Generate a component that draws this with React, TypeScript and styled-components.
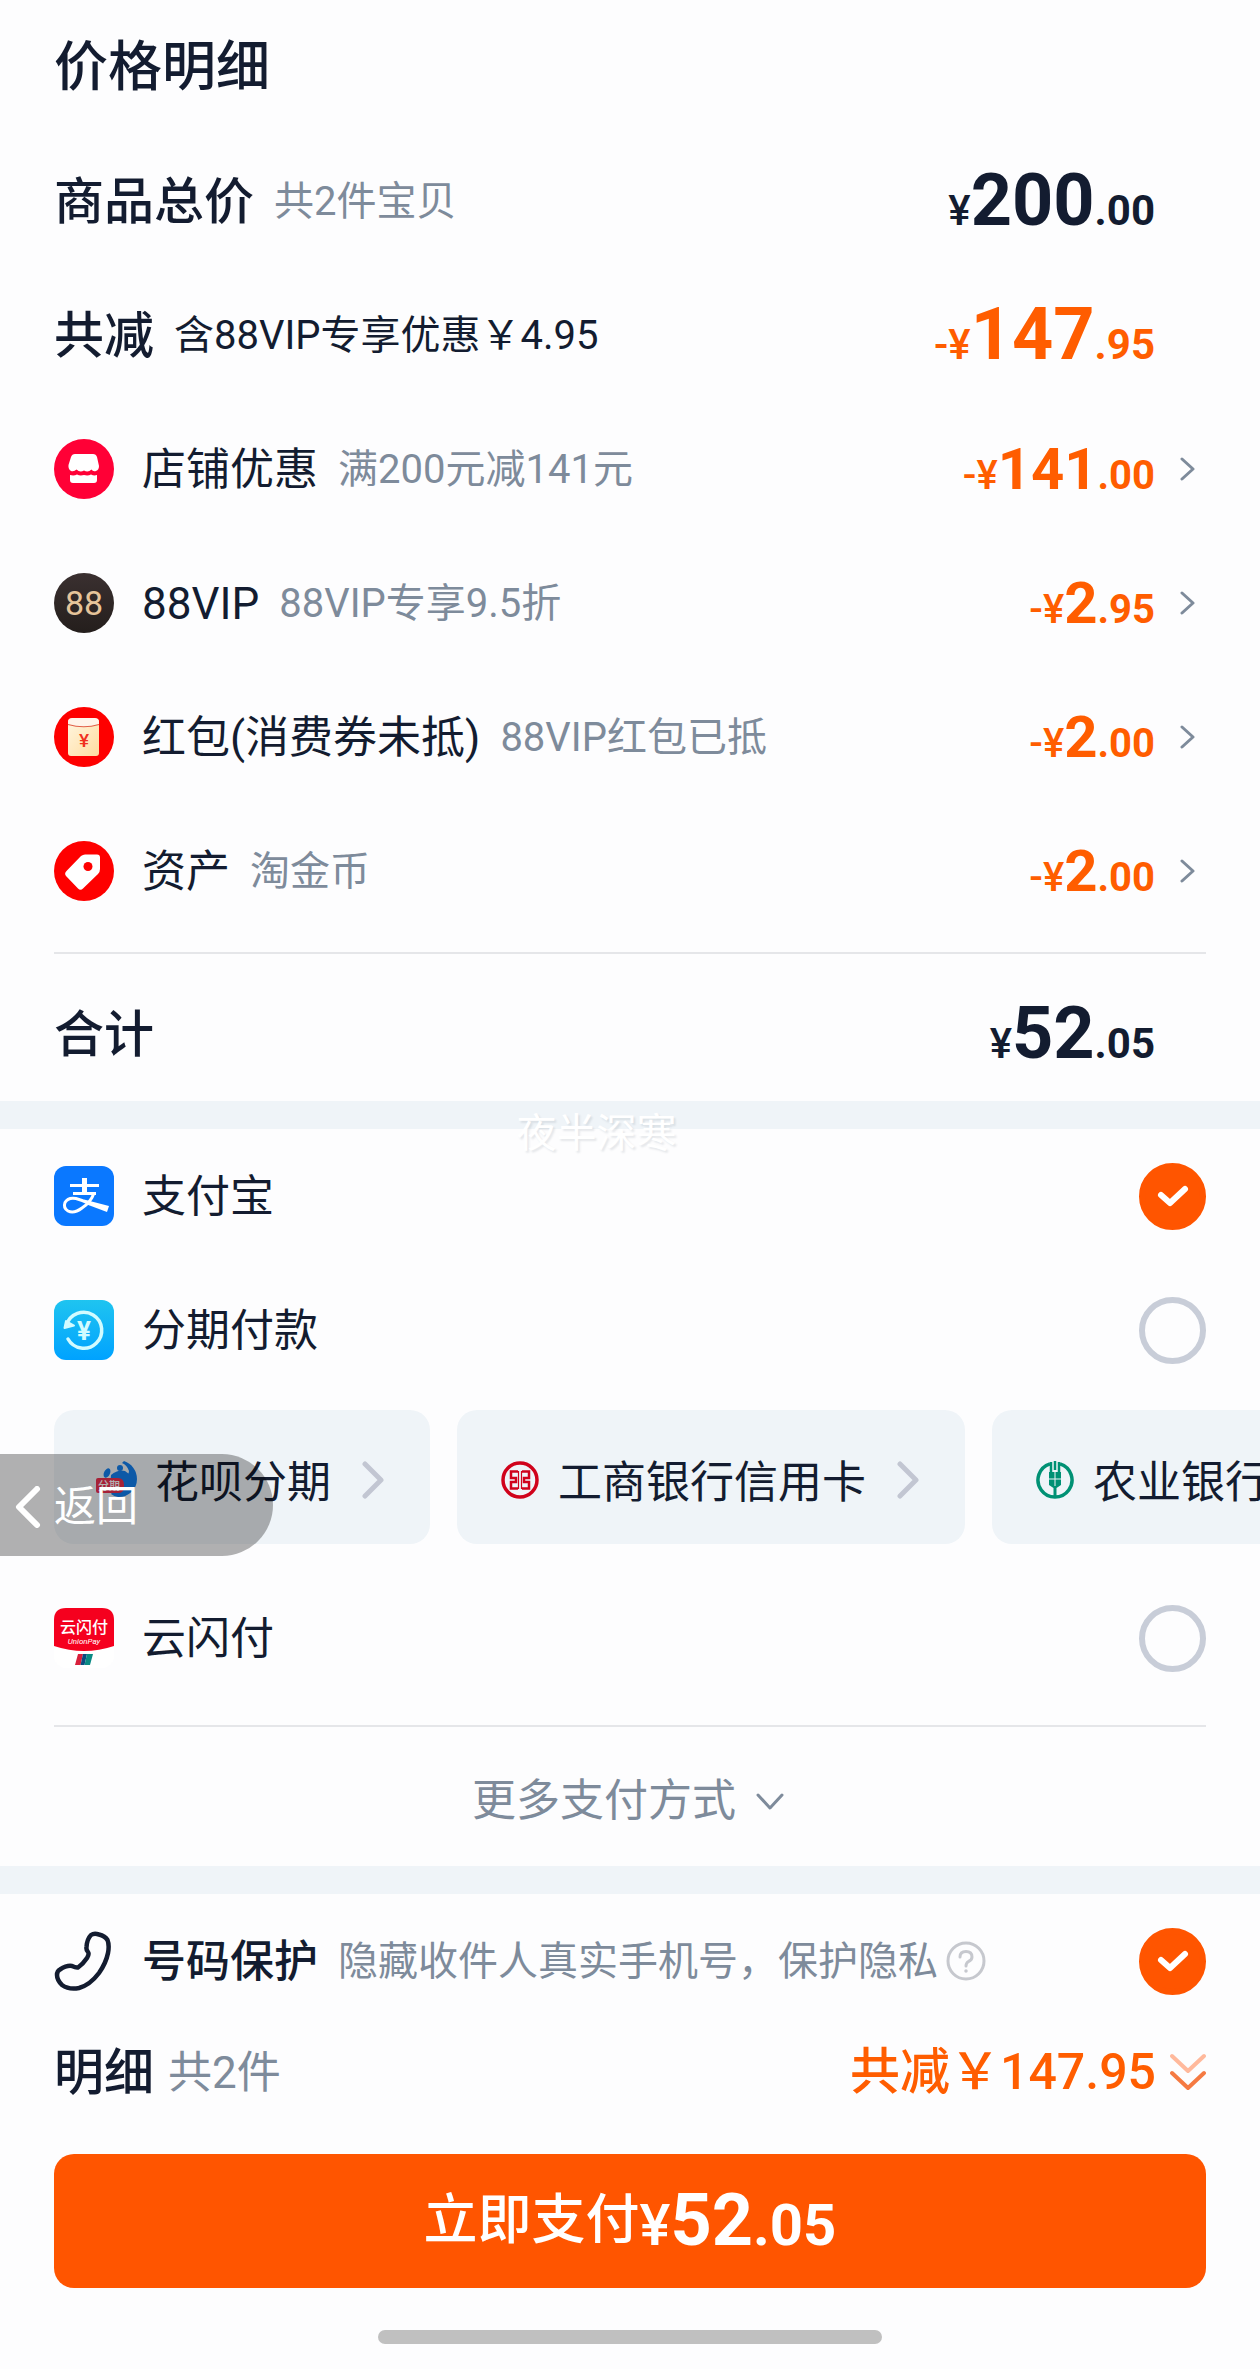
import React, { useState } from "react";
import styled, { createGlobalStyle } from "styled-components";

const INK = "#131c30";
const MUTED = "#7e8b9b";
const ORANGE = "#ff5500";
const PRICE_ORANGE = "#ff5d00";
const PANEL = "#eff4f8";
const FONT = 'Roboto, "Noto Sans CJK SC", sans-serif';

const GlobalStyle = createGlobalStyle`
  *, *::before, *::after { box-sizing: border-box; }
  body {
    margin: 0;
    background: #fdfdfe;
    color: ${INK};
    font-family: ${FONT};
    overflow-x: hidden;
  }
  button {
    margin: 0;
    padding: 0;
    border: 0;
    background: none;
    color: inherit;
    font: inherit;
    text-align: left;
    cursor: pointer;
  }
  svg { display: block; flex: none; }
`;

const Page = styled.main`
  display: flex;
  flex-direction: column;
  width: 100%;
  line-height: 1.2;
`;

const Section = styled.section`
  display: flex;
  flex-direction: column;
  padding: 0 54px;
`;

const Title = styled.h1`
  display: flex;
  align-items: center;
  height: 134px;
  margin: 0;
  padding-top: 2px;
  font-size: 54px;
  font-weight: 500;
`;

const List = styled.ul`
  margin: 0;
  padding: 0;
  list-style: none;
`;

const Row = styled.div`
  display: flex;
  align-items: center;
  justify-content: space-between;
  width: 100%;
  height: 134px;
`;

const SummaryRow = styled(Row)`
  padding-right: 51px;
`;

const RowButton = styled(Row).attrs({ as: "button", type: "button" })`
  padding-right: 11px;
`;

const Lead = styled.span`
  display: flex;
  align-items: center;
  gap: 20px;
  white-space: nowrap;
`;

const IconSlot = styled.span`
  width: 60px;
  margin-right: 8px;
`;

const Label = styled.span<{ $size?: number; $weight?: number; $muted?: boolean }>`
  padding-top: 2px;
  font-size: ${(p) => p.$size ?? 44}px;
  font-weight: ${(p) => p.$weight ?? 400};
  color: ${(p) => (p.$muted ? MUTED : INK)};
`;

const Note = styled.span<{ $dark?: boolean }>`
  padding-top: 2px;
  font-size: 40px;
  color: ${(p) => (p.$dark ? INK : MUTED)};
`;

const Trail = styled.span`
  display: flex;
  align-items: center;
  gap: 25px;
`;

const PriceText = styled.span<{ $size: number; $color: string }>`
  font-size: ${(p) => p.$size}px;
  font-weight: 700;
  line-height: 1;
  color: ${(p) => p.$color};
  white-space: nowrap;
`;

const PriceSmall = styled.span<{ $size: number; $weight?: number }>`
  font-size: ${(p) => p.$size}px;
  font-weight: ${(p) => p.$weight ?? 700};
`;

const Rule = styled.hr<{ $top: number; $bottom: number }>`
  width: 100%;
  height: 2px;
  margin: ${(p) => p.$top}px 0 ${(p) => p.$bottom}px;
  border: 0;
  background: #e5e6e9;
`;

const Band = styled.div`
  position: relative;
  height: 28px;
  background: ${PANEL};
`;

const Watermark = styled.span`
  position: absolute;
  left: 41%;
  top: 9px;
  font-size: 40px;
  color: #ffffff;
  text-shadow: 2px 2px 2px rgba(60, 70, 90, 0.12);
  pointer-events: none;
`;

const PayLabel = styled.label`
  display: flex;
  align-items: center;
  justify-content: space-between;
  height: 134px;
  cursor: pointer;
`;

const CheckBox = styled.span`
  display: grid;
  width: 67px;
  height: 67px;
  & > * { grid-area: 1 / 1; }
  & > svg { pointer-events: none; }
`;

const Toggle = styled.input`
  appearance: none;
  width: 67px;
  height: 67px;
  margin: 0;
  border: 6px solid #c8cdd8;
  border-radius: 50%;
  cursor: pointer;
  &:checked {
    border-color: ${ORANGE};
    background: ${ORANGE};
  }
  &:not(:checked) + svg { visibility: hidden; }
`;

const CardArea = styled.div`
  position: relative;
  margin: 13px -54px 27px;
`;

const Cards = styled.div`
  display: flex;
  gap: 27px;
  padding-left: 54px;
  overflow: hidden;
`;

const Card = styled.button`
  display: flex;
  flex: none;
  align-items: center;
  height: 134px;
  padding: 6px 46px 0 44px;
  border-radius: 20px;
  background: ${PANEL};
  font-size: 44px;
  white-space: nowrap;
`;

const CardName = styled.span`
  margin: 0 31px 0 19px;
  padding-top: 6px;
`;

const BackPill = styled.button`
  position: absolute;
  left: 0;
  top: 44px;
  display: flex;
  align-items: center;
  gap: 13px;
  width: 273px;
  height: 102px;
  padding: 4px 0 0 15px;
  border-radius: 0 51px 51px 0;
  background: rgba(0, 0, 0, 0.3);
  color: #ffffff;
  font-size: 42px;
`;

const MoreButton = styled.button`
  display: flex;
  align-items: center;
  justify-content: center;
  gap: 20px;
  height: 139px;
  padding-top: 10px;
  color: ${MUTED};
  font-size: 44px;
`;

const HelpButton = styled.button`
  margin-left: -12px;
`;

const DetailRow = styled(Row)`
  height: 88px;
`;

const DetailLead = styled(Lead)`
  gap: 14px;
`;

const SavedButton = styled.button`
  display: flex;
  align-items: center;
  gap: 14px;
  color: ${PRICE_ORANGE};
  font-size: 50px;
  font-weight: 500;
  white-space: nowrap;
`;

const PayButton = styled.button`
  display: flex;
  align-items: center;
  justify-content: center;
  height: 134px;
  margin-top: 38px;
  border-radius: 20px;
  background: ${ORANGE};
  color: #ffffff;
  font-size: 54px;
  font-weight: 500;
`;

const HomeBar = styled.div`
  align-self: center;
  width: 40%;
  height: 14px;
  margin: 42px 0 24px;
  border-radius: 7px;
  background: #c0c0c0;
`;

function ChevronRight({ large, color = MUTED }: { large?: boolean; color?: string }) {
  return large ? (
    <svg width="22" height="38" viewBox="0 0 22 38" fill="none" stroke={color} strokeWidth="5" strokeLinecap="round" strokeLinejoin="round">
      <path d="M3 3 19 19 3 35" />
    </svg>
  ) : (
    <svg width="15" height="24" viewBox="0 0 15 24" fill="none" stroke={color} strokeWidth="3" strokeLinecap="round" strokeLinejoin="round">
      <path d="M2 2 13 12 2 22" />
    </svg>
  );
}

function ShopIcon() {
  return (
    <svg width="60" height="60" viewBox="0 0 60 60">
      <circle cx="30" cy="30" r="30" fill="#ff0036" />
      <path d="M21 15H39Q42 15 43 18L45 27Q45 31 42 32Q39 33 37.500 30.500Q34 34 30 31.500Q26 34 22.500 30.500Q20 33 17 32Q14 30 14.500 26L17 18Q18 15 21 15Z" fill="#fff" />
      <path d="M16 36Q20 37 23 35.500Q26 37 30 36Q34 37 37 35.500Q40 37 43 36V41Q43 44 40 44H19Q16 44 16 41Z" fill="#fff" />
    </svg>
  );
}

function VipIcon() {
  return (
    <svg width="60" height="60" viewBox="0 0 60 60">
      <defs>
        <linearGradient id="vip" x1="0" y1="0" x2="0" y2="1">
          <stop offset="0" stopColor="#3a3030" />
          <stop offset="1" stopColor="#241e1c" />
        </linearGradient>
      </defs>
      <circle cx="30" cy="30" r="30" fill="url(#vip)" />
      <text x="30" y="42" textAnchor="middle" fontFamily="Roboto, sans-serif" fontSize="34" fontWeight="400" fill="#e6c49a">88</text>
    </svg>
  );
}

function PacketIcon() {
  return (
    <svg width="60" height="60" viewBox="0 0 60 60">
      <defs>
        <linearGradient id="packet" x1="0" y1="0" x2="1" y2="1">
          <stop offset="0" stopColor="#fff6e0" />
          <stop offset="1" stopColor="#ffdca0" />
        </linearGradient>
      </defs>
      <circle cx="30" cy="30" r="30" fill="#fe0000" />
      <rect x="14" y="12" width="31" height="37" rx="3" fill="url(#packet)" />
      <path d="M14 15Q14 11 18 11H41Q45 11 45 15V17Q30 22 14 17Z" fill="#fff4ea" />
      <path d="M14 17.500Q30 22 45 17.500" fill="none" stroke="#e0604a" strokeWidth="1.200" />
      <text x="30" y="40" textAnchor="middle" fontFamily="Roboto, sans-serif" fontSize="19" fontWeight="500" fill="#f03020">¥</text>
    </svg>
  );
}

function TagIcon() {
  return (
    <svg width="60" height="60" viewBox="0 0 60 60">
      <circle cx="30" cy="30" r="30" fill="#fe0000" />
      <path d="M27 15Q29 13.500 31 13.500L43 13.500Q46 13.500 46 16.500V28Q46 31 44 33L29 47.500Q26.500 50 24 47.500L12 35Q10 32.500 12.500 30Z" fill="#fff" />
      <circle cx="34" cy="25.500" r="4.500" fill="#fe0000" />
    </svg>
  );
}

function AlipayIcon() {
  return (
    <svg width="60" height="60" viewBox="0 0 60 60" fill="none" stroke="#fff">
      <rect width="60" height="60" rx="12" fill="#0a78ff" stroke="none" />
      <path d="M30.500 12V27" strokeWidth="5" />
      <path d="M16 19.500H45" strokeWidth="3" />
      <path d="M19 27.500H42" strokeWidth="3" />
      <path d="M40 27Q37 36 28 42Q20 48 14 45Q9 42 11 36.500Q14 31 22 32.500Q28 34 36 38" strokeWidth="3" />
      <path d="M30 33.500 55 40 53 46 33 38.500Z" fill="#fff" stroke="none" />
    </svg>
  );
}

function InstallmentIcon() {
  return (
    <svg width="60" height="60" viewBox="0 0 60 60">
      <defs>
        <linearGradient id="inst" x1="0" y1="0" x2="0" y2="1">
          <stop offset="0" stopColor="#1fc4f0" />
          <stop offset="1" stopColor="#00a2ff" />
        </linearGradient>
      </defs>
      <rect width="60" height="60" rx="12" fill="url(#inst)" />
      <path d="M12.500 25A18 18 0 1 1 14 39" fill="none" stroke="#d2fbff" strokeWidth="3.500" strokeLinecap="round" />
      <path d="M10.500 28 20 25.500 12 21Z" fill="#d2fbff" stroke="#d2fbff" strokeWidth="2" strokeLinejoin="round" />
      <text x="30" y="39.500" textAnchor="middle" fontFamily="Roboto, sans-serif" fontSize="26" fontWeight="700" fill="#d2fbff">¥</text>
    </svg>
  );
}

function UnionPayIcon() {
  return (
    <svg width="60" height="60" viewBox="0 0 60 60">
      <rect width="60" height="60" rx="12" fill="#fff" />
      <path d="M12 0H48Q60 0 60 12V38Q30 48 0 38V12Q0 0 12 0Z" fill="#f5001e" />
      <text x="30" y="25" textAnchor="middle" fontFamily="'Noto Sans CJK SC', sans-serif" fontSize="16" fontWeight="500" fill="#fff">云闪付</text>
      <text x="30" y="36" textAnchor="middle" fontFamily="Roboto, sans-serif" fontSize="8" fontStyle="italic" fill="#fff">UnionPay</text>
      <path d="M24 46H29L26.500 57H21Z" fill="#d8203c" />
      <path d="M29 46H33L30.500 57H26.500Z" fill="#0c4a80" />
      <path d="M33 46H39L36 57H30.500Z" fill="#0a8a84" />
    </svg>
  );
}

function HuabeiIcon() {
  return (
    <svg width="38" height="38" viewBox="0 0 38 38" overflow="visible">
      <path d="M26 0A19 19 0 0 1 39 18A18 18 0 0 1 20 36A15 15 0 0 1 13 33L24 18Q31 15 31 10Q29 4 24 2Z" fill="#1480f0" />
      <path d="M13 14Q20 8 27 10L31 13 28 24 12 26Z" fill="#1480f0" />
      <ellipse cx="9" cy="12" rx="3" ry="5" transform="rotate(25 9 12)" fill="#1480f0" />
      <circle cx="22" cy="7" r="3" fill="#1480f0" />
      <path d="M0 17H20Q26 17 26 24V26Q26 32 20 32H0Q-2 32 -2 30V19Q-2 17 0 17Z" fill="#ee3050" />
      <text x="11" y="29" textAnchor="middle" fontFamily="'Noto Sans CJK SC', sans-serif" fontSize="11" fontWeight="500" fill="#fff">分期</text>
    </svg>
  );
}

function IcbcIcon() {
  return (
    <svg width="38" height="38" viewBox="0 0 38 38" fill="none" stroke="#d0021b">
      <circle cx="19" cy="19" r="17" strokeWidth="3.500" />
      <path d="M17 10.500H10V17H15V21H10V27.500H17M21 10.500H28V17H23V21H28V27.500H21" strokeWidth="2.500" />
      <path d="M17.500 10V28M20.500 10V28" strokeWidth="1.200" />
    </svg>
  );
}

function AbcIcon() {
  return (
    <svg width="38" height="38" viewBox="0 0 38 38" fill="none" stroke="#009174">
      <path d="M14 2.800A17 17 0 1 0 24 2.800" strokeWidth="3.500" />
      <path d="M19 0V9M15 1V12M23 1V12" strokeWidth="2.500" />
      <path d="M13 11H25V24L20.500 27V36H17.500V27L13 24Z" fill="#009174" stroke="none" />
      <path d="M19 10V25M13 18H25" stroke="#eff4f8" strokeWidth="1" />
    </svg>
  );
}

function PhoneIcon() {
  return (
    <svg width="60" height="60" viewBox="0 0 60 60" fill="none" stroke={INK} strokeWidth="4.500" strokeLinejoin="round">
      <path d="M37 4Q40 2 45 3.500Q51 5 53.500 9Q55.500 14 54 22Q52 32 45 42Q36 54 25 57Q15 59 8 54Q3 49 3 44Q3 40 6 38.500Q13 34 18 35Q22 37 24 36.500Q29 33 33 27Q35.500 23 34 21Q32 19 32.500 16Q33 8 37 4Z" />
    </svg>
  );
}

function HelpIcon() {
  return (
    <svg width="40" height="40" viewBox="0 0 40 40" fill="none" stroke="#c6c8ce" strokeWidth="3" strokeLinecap="round">
      <circle cx="20" cy="20" r="18" />
      <path d="M14 16Q14 10.500 20 10.500T26 16Q26 19 22.500 20.500Q20 22 20 25" />
      <circle cx="20" cy="30" r="1" fill="#c6c8ce" strokeWidth="1.500" />
    </svg>
  );
}

function Tick() {
  return (
    <svg width="67" height="67" viewBox="0 0 67 67" fill="none" stroke="#fff" strokeWidth="6" strokeLinecap="round" strokeLinejoin="round">
      <path d="M22 32 31 40 46 26" />
    </svg>
  );
}

type PriceProps = { whole: string; cents: string; minus?: boolean; size?: number; small?: number; color?: string };

function Price({ whole, cents, minus, size = 72, small = 42, color = INK }: PriceProps) {
  return (
    <PriceText $size={size} $color={color}>
      <PriceSmall $size={small} $weight={500}>{minus ? "-¥" : "¥"}</PriceSmall>
      {whole}
      <PriceSmall $size={small}>.{cents}</PriceSmall>
    </PriceText>
  );
}

const discounts = [
  { icon: <ShopIcon />, name: "店铺优惠", note: "满200元减141元", whole: "141", cents: "00" },
  { icon: <VipIcon />, name: "88VIP", note: "88VIP专享9.5折", whole: "2", cents: "95" },
  { icon: <PacketIcon />, name: "红包(消费券未抵)", note: "88VIP红包已抵", whole: "2", cents: "00" },
  { icon: <TagIcon />, name: "资产", note: "淘金币", whole: "2", cents: "00" },
];

const cards = [
  { icon: <HuabeiIcon />, name: "花呗分期" },
  { icon: <IcbcIcon />, name: "工商银行信用卡" },
  { icon: <AbcIcon />, name: "农业银行信用卡" },
];

type OptionProps = { icon: React.ReactNode; name: string; value: string; current: string; onPick: (v: string) => void };

function PayOption({ icon, name, value, current, onPick }: OptionProps) {
  return (
    <PayLabel>
      <Lead>
        <IconSlot>{icon}</IconSlot>
        <Label>{name}</Label>
      </Lead>
      <CheckBox>
        <Toggle type="radio" name="pay" value={value} checked={current === value} onChange={() => onPick(value)} />
        <Tick />
      </CheckBox>
    </PayLabel>
  );
}

export default function App() {
  const [method, setMethod] = useState("alipay");
  const [guard, setGuard] = useState(true);

  return (
    <Page>
      <GlobalStyle />
      <Section>
        <Title>价格明细</Title>
        <SummaryRow>
          <Lead>
            <Label $size={50} $weight={500}>商品总价</Label>
            <Note>共2件宝贝</Note>
          </Lead>
          <Price whole="200" cents="00" />
        </SummaryRow>
        <SummaryRow>
          <Lead>
            <Label $size={50} $weight={500}>共减</Label>
            <Note $dark>含88VIP专享优惠￥4.95</Note>
          </Lead>
          <Price minus whole="147" cents="95" color={PRICE_ORANGE} />
        </SummaryRow>
        <List>
          {discounts.map((d) => (
            <li key={d.name}>
              <RowButton>
                <Lead>
                  <IconSlot>{d.icon}</IconSlot>
                  <Label>{d.name}</Label>
                  <Note>{d.note}</Note>
                </Lead>
                <Trail>
                  <Price minus whole={d.whole} cents={d.cents} size={58} small={40} color={PRICE_ORANGE} />
                  <ChevronRight />
                </Trail>
              </RowButton>
            </li>
          ))}
        </List>
        <Rule $top={14} $bottom={13} />
        <SummaryRow>
          <Label $size={50} $weight={500}>合计</Label>
          <Price whole="52" cents="05" />
        </SummaryRow>
      </Section>

      <Band>
        <Watermark>夜半深寒</Watermark>
      </Band>

      <Section>
        <PayOption icon={<AlipayIcon />} name="支付宝" value="alipay" current={method} onPick={setMethod} />
        <PayOption icon={<InstallmentIcon />} name="分期付款" value="installment" current={method} onPick={setMethod} />
        <CardArea>
          <Cards>
            {cards.map((c) => (
              <Card key={c.name} type="button">
                {c.icon}
                <CardName>{c.name}</CardName>
                <ChevronRight large color="#c2c6d2" />
              </Card>
            ))}
          </Cards>
          <BackPill type="button">
            <svg width="26" height="42" viewBox="0 0 26 42" fill="none" stroke="#fff" strokeWidth="6" strokeLinecap="round" strokeLinejoin="round">
              <path d="M22 3 4 21 22 39" />
            </svg>
            返回
          </BackPill>
        </CardArea>
        <PayOption icon={<UnionPayIcon />} name="云闪付" value="unionpay" current={method} onPick={setMethod} />
        <Rule $top={20} $bottom={0} />
        <MoreButton type="button">
          更多支付方式
          <svg width="32" height="18" viewBox="0 0 32 18" fill="none" stroke={MUTED} strokeWidth="3" strokeLinecap="round" strokeLinejoin="round">
            <path d="M2 2 14 15 26 2" />
          </svg>
        </MoreButton>
      </Section>

      <Band />

      <Section>
        <Row>
          <Lead>
            <IconSlot><PhoneIcon /></IconSlot>
            <Label as="label" htmlFor="guard" $weight={500}>号码保护</Label>
            <Note>隐藏收件人真实手机号，保护隐私</Note>
            <HelpButton type="button" aria-label="号码保护说明"><HelpIcon /></HelpButton>
          </Lead>
          <CheckBox>
            <Toggle id="guard" type="checkbox" checked={guard} onChange={() => setGuard(!guard)} />
            <Tick />
          </CheckBox>
        </Row>
        <DetailRow>
          <DetailLead>
            <Label $size={50} $weight={500}>明细</Label>
            <Label $muted>共2件</Label>
          </DetailLead>
          <SavedButton type="button">
            共减￥147.95
            <svg width="36" height="38" viewBox="0 0 36 38" fill="none" strokeWidth="4" strokeLinecap="round" strokeLinejoin="round">
              <path d="M2 3 18 18 34 3" stroke="#ffb99c" />
              <path d="M2 20 18 35 34 20" stroke="#f57a42" />
            </svg>
          </SavedButton>
        </DetailRow>
        <PayButton type="button">
          立即支付
          <Price whole="52" cents="05" size={72} small={58} color="#ffffff" />
        </PayButton>
      </Section>
      <HomeBar />
    </Page>
  );
}
